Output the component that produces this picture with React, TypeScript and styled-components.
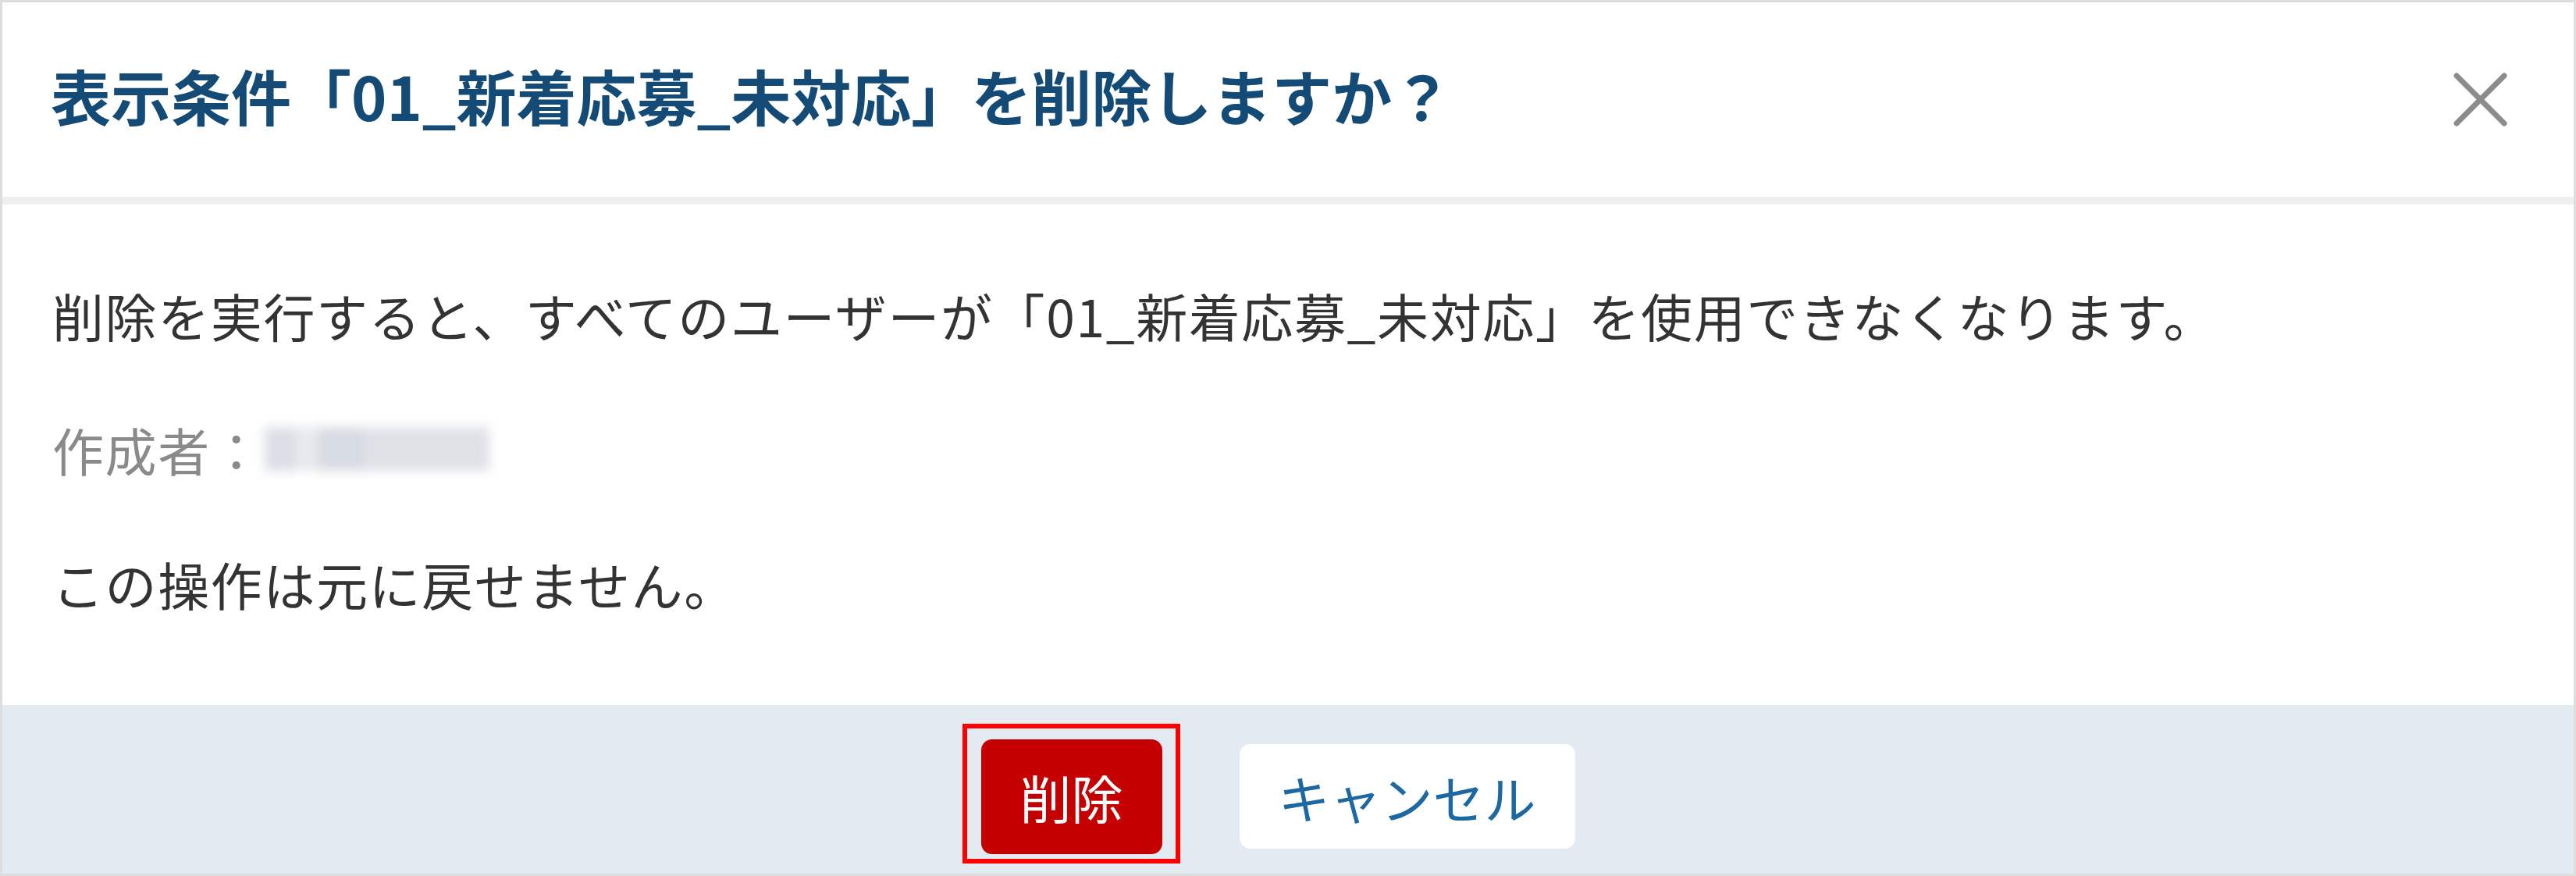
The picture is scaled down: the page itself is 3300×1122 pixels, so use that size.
import React from 'react';
import styled, { createGlobalStyle } from 'styled-components';

const GlobalStyle = createGlobalStyle`
  html, body {
    margin: 0;
    padding: 0;
    background: #ffffff;
  }
  * {
    box-sizing: border-box;
  }
`

const Dialog = styled.div`
  width: 3300px;
  height: 1122px;
  display: flex;
  flex-direction: column;
  border: 3px solid #dddddd;
  background: #ffffff;
  font-family: "Noto Sans CJK JP", "Noto Sans", sans-serif;
`

const Header = styled.header`
  height: 259px;
  flex: none;
  display: flex;
  align-items: center;
  justify-content: space-between;
  padding: 0 84px 0 62px;
  border-bottom: 10px solid #efefef;
`

const Title = styled.h1`
  margin: 0 0 12px;
  font-size: 77px;
  line-height: 1;
  font-weight: 700;
  color: #134a76;
`

const CloseButton = styled.button`
  width: 71px;
  height: 71px;
  padding: 0;
  border: none;
  background: transparent;
  cursor: pointer;
  display: flex;
  align-items: center;
  justify-content: center;
`

const Body = styled.div`
  flex: 1;
  padding: 91px 64px 0;
`

const Paragraph = styled.p<{ $muted?: boolean }>`
  margin: 0 0 72px;
  display: flex;
  align-items: center;
  height: 100px;
  font-size: 66px;
  line-height: 100px;
  letter-spacing: 1.6px;
  color: ${p => p.$muted ? '#8a8a8a' : '#333333'};
`

const Redacted = styled.span`
  display: inline-block;
  width: 288px;
  height: 56px;
  margin-left: 2px;
  background:
    linear-gradient(90deg, rgba(200, 205, 214, 0.5) 0 14%, rgba(226, 229, 234, 0.6) 14% 24%, rgba(196, 202, 212, 0.55) 24% 44%, rgba(212, 216, 223, 0.6) 44% 100%),
    #eef0f3;
  filter: blur(7px);
`

const Footer = styled.footer`
  height: 216px;
  flex: none;
  display: flex;
  align-items: center;
  justify-content: center;
  gap: 99px;
  padding: 18px 26px 0 0;
  background: #e3eaf2;
`

const Highlight = styled.div`
  position: relative;
  display: flex;

  &::after {
    content: '';
    position: absolute;
    top: -20px;
    bottom: -12px;
    left: -24px;
    right: -23px;
    border: 6px solid #ff0000;
    pointer-events: none;
  }
`

const ActionButton = styled.button<{ $variant: 'danger' | 'plain' }>`
  height: ${p => p.$variant === 'danger' ? '147px' : '134px'};
  width: ${p => p.$variant === 'danger' ? '232px' : '430px'};
  border: none;
  border-radius: 14px;
  font-family: inherit;
  font-size: 66px;
  line-height: 1;
  cursor: pointer;
  background: ${p => p.$variant === 'danger' ? '#c40000' : '#ffffff'};
  color: ${p => p.$variant === 'danger' ? '#ffffff' : '#1b68a2'};
`

function CloseIcon() {
  return <svg width="71" height="71" viewBox="0 0 71 71">
    <path d="M5 5 L66 66 M66 5 L5 66" stroke="#8c8c8c" strokeWidth="7" strokeLinecap="round" fill="none" />
  </svg>
}

export default function App() {
  const conditionName = '01_新着応募_未対応'

  return <>
    <GlobalStyle />
    <Dialog>
      <Header>
        <Title>表示条件「{conditionName}」を削除しますか？</Title>
        <CloseButton aria-label="閉じる">
          <CloseIcon />
        </CloseButton>
      </Header>
      <Body>
        <Paragraph>削除を実行すると、すべてのユーザーが「{conditionName}」を使用できなくなります。</Paragraph>
        <Paragraph $muted>作成者：<Redacted /></Paragraph>
        <Paragraph>この操作は元に戻せません。</Paragraph>
      </Body>
      <Footer>
        <Highlight>
          <ActionButton $variant="danger">削除</ActionButton>
        </Highlight>
        <ActionButton $variant="plain">キャンセル</ActionButton>
      </Footer>
    </Dialog>
  </>
}
